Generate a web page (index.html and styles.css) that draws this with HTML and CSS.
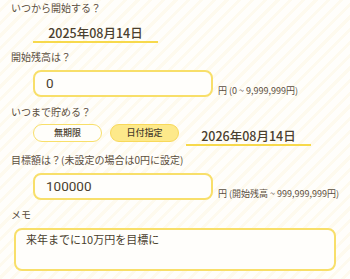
FILE: index.html
```html
<!DOCTYPE html>
<html lang="ja">
<head>
<meta charset="utf-8">
<link rel="stylesheet" href="styles.css">
</head>
<body>
<div class="form">
  <div class="label first">いつから開始する？</div>
  <div class="date-row">
    <div class="date">2025年08月14日</div>
  </div>
  <div class="label">開始残高は？</div>
  <div class="input-row">
    <div class="input">0</div>
    <div class="unit">円 (0 ~ 9,999,999円)</div>
  </div>
  <div class="label">いつまで貯める？</div>
  <div class="choice-row">
    <div class="btn">無期限</div>
    <div class="btn active">日付指定</div>
    <div class="date end">2026年08月14日</div>
  </div>
  <div class="label">目標額は？(未設定の場合は0円に設定)</div>
  <div class="input-row">
    <div class="input">100000</div>
    <div class="unit">円 (開始残高 ~ 999,999,999円)</div>
  </div>
  <div class="label memo-label">メモ</div>
  <div class="memo">来年までに10万円を目標に</div>
</div>
</body>
</html>
```
FILE: styles.css
```css
html, body {
  margin: 0;
  padding: 0;
}
body {
  width: 350px;
  height: 279px;
  overflow: hidden;
  font-family: "Noto Sans CJK JP", "Noto Sans", sans-serif;
  color: #5b4e3e;
  background-color: #fffefa;
  background-image: repeating-linear-gradient(135deg, #fffefb 0 6px, #fefaee 6px 9px);
}
.form {
  padding: 0 0 0 11px;
}
.label {
  font-size: 10px;
  line-height: 14px;
  height: 14px;
  color: #5b4e3e;
  white-space: nowrap;
}
.first {
  margin-top: 1px;
}
.date-row {
  display: flex;
  padding-left: 22px;
  margin-top: 9px;
  margin-bottom: 7px;
}
.date {
  width: 125px;
  text-align: center;
  font-size: 12.5px;
  font-weight: 500;
  line-height: 17px;
  color: #4a3f2e;
  border-bottom: 2px solid #f7d94c;
}
.input-row {
  display: flex;
  align-items: flex-end;
  padding-left: 22px;
  margin-top: 6px;
  margin-bottom: 8px;
}
.input {
  box-sizing: border-box;
  flex: none;
  width: 180px;
  height: 27px;
  border: 2px solid #f8df6a;
  border-radius: 8px;
  background: #fffefb;
  font-family: "Roboto", "Noto Sans CJK JP", sans-serif;
  font-size: 13.5px;
  line-height: 23px;
  padding-left: 11px;
  color: #4a3f2e;
}
.unit {
  font-size: 9px;
  line-height: 11px;
  margin-left: 5px;
  margin-bottom: 1px;
  color: #5b4e3e;
  white-space: nowrap;
}
.choice-row {
  display: flex;
  align-items: flex-start;
  padding-left: 22px;
  margin-top: 5px;
  margin-bottom: 7px;
}
.btn {
  box-sizing: border-box;
  width: 69px;
  height: 18px;
  border: 1.5px solid #f8df6a;
  border-radius: 9px;
  background: #fffefa;
  font-size: 9px;
  line-height: 15px;
  text-align: center;
  font-weight: 500;
  color: #4a3f2e;
  margin-right: 8px;
}
.btn.active {
  background: #fde98a;
  border-color: #f8d95a;
}
.end {
  margin-left: -1px;
  margin-top: 3px;
}
.memo-label {
  margin-top: 0;
}
.memo {
  box-sizing: border-box;
  margin: 6px 0 0 3px;
  width: 322px;
  height: 43px;
  border: 2px solid #f8df6a;
  border-radius: 8px;
  background: #fffefb;
  font-size: 11px;
  line-height: 16px;
  padding: 1px 10px;
  color: #4a3f2e;
}
```
